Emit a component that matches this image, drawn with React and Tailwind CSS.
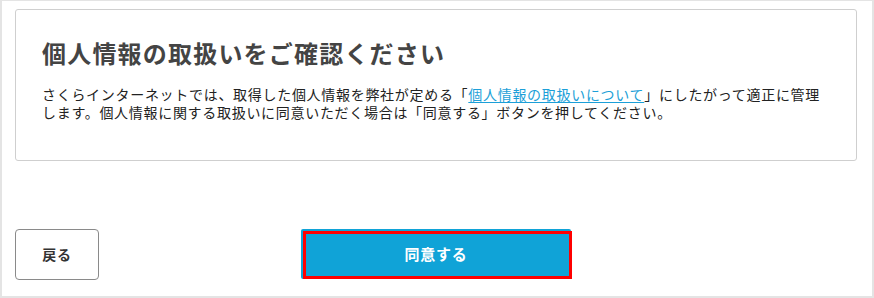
import React from 'react';

const font = { fontFamily: '"Noto Sans CJK JP", "Noto Sans", sans-serif' };

const App = () => {
  return (
    <div
      className="w-[874px] h-[298px] bg-white border-t border-x-2 border-b-2 border-[#e4e4e4] pl-[13px] pr-[15px] pt-[8px]"
      style={font}
    >
      {/* Notice card */}
      <div className="border border-[#cfcfcf] rounded-[3px] pl-[26px] pr-[27px] pt-[25px] pb-[39px]">
        <h1 className="text-[24px] leading-[36px] font-bold tracking-[0.05em] text-[#444]">
          個人情報の取扱いをご確認ください
        </h1>
        <p className="mt-[14px] text-[14px] leading-[18px] tracking-[0.05em] text-[#222]">
          さくらインターネットでは、取得した個人情報を弊社が定める「
          <a href="#" className="text-[#1c9fd8] underline underline-offset-2">
            個人情報の取扱いについて
          </a>
          」にしたがって適正に管理します。個人情報に関する取扱いに同意いただく場合は「同意する」ボタンを押してください。
        </p>
      </div>

      {/* Actions */}
      <div className="grid grid-cols-[1fr_auto_1fr] items-start mt-[68px]">
        <button className="justify-self-start w-[84px] h-[51px] border border-[#8a8a8a] rounded-[4px] bg-white text-[14px] font-bold tracking-[0.05em] text-[#333]">
          戻る
        </button>
        <button className="relative w-[270px] h-[50px] bg-[#10a3d7] rounded-[2px] text-white text-[15px] font-bold tracking-[0.05em]">
          <span className="pointer-events-none absolute top-[2px] left-[2px] -right-[1px] bottom-0 border-[3px] border-[#ff0000]" />
          同意する
        </button>
        <div />
      </div>
    </div>
  );
};

export default App;
